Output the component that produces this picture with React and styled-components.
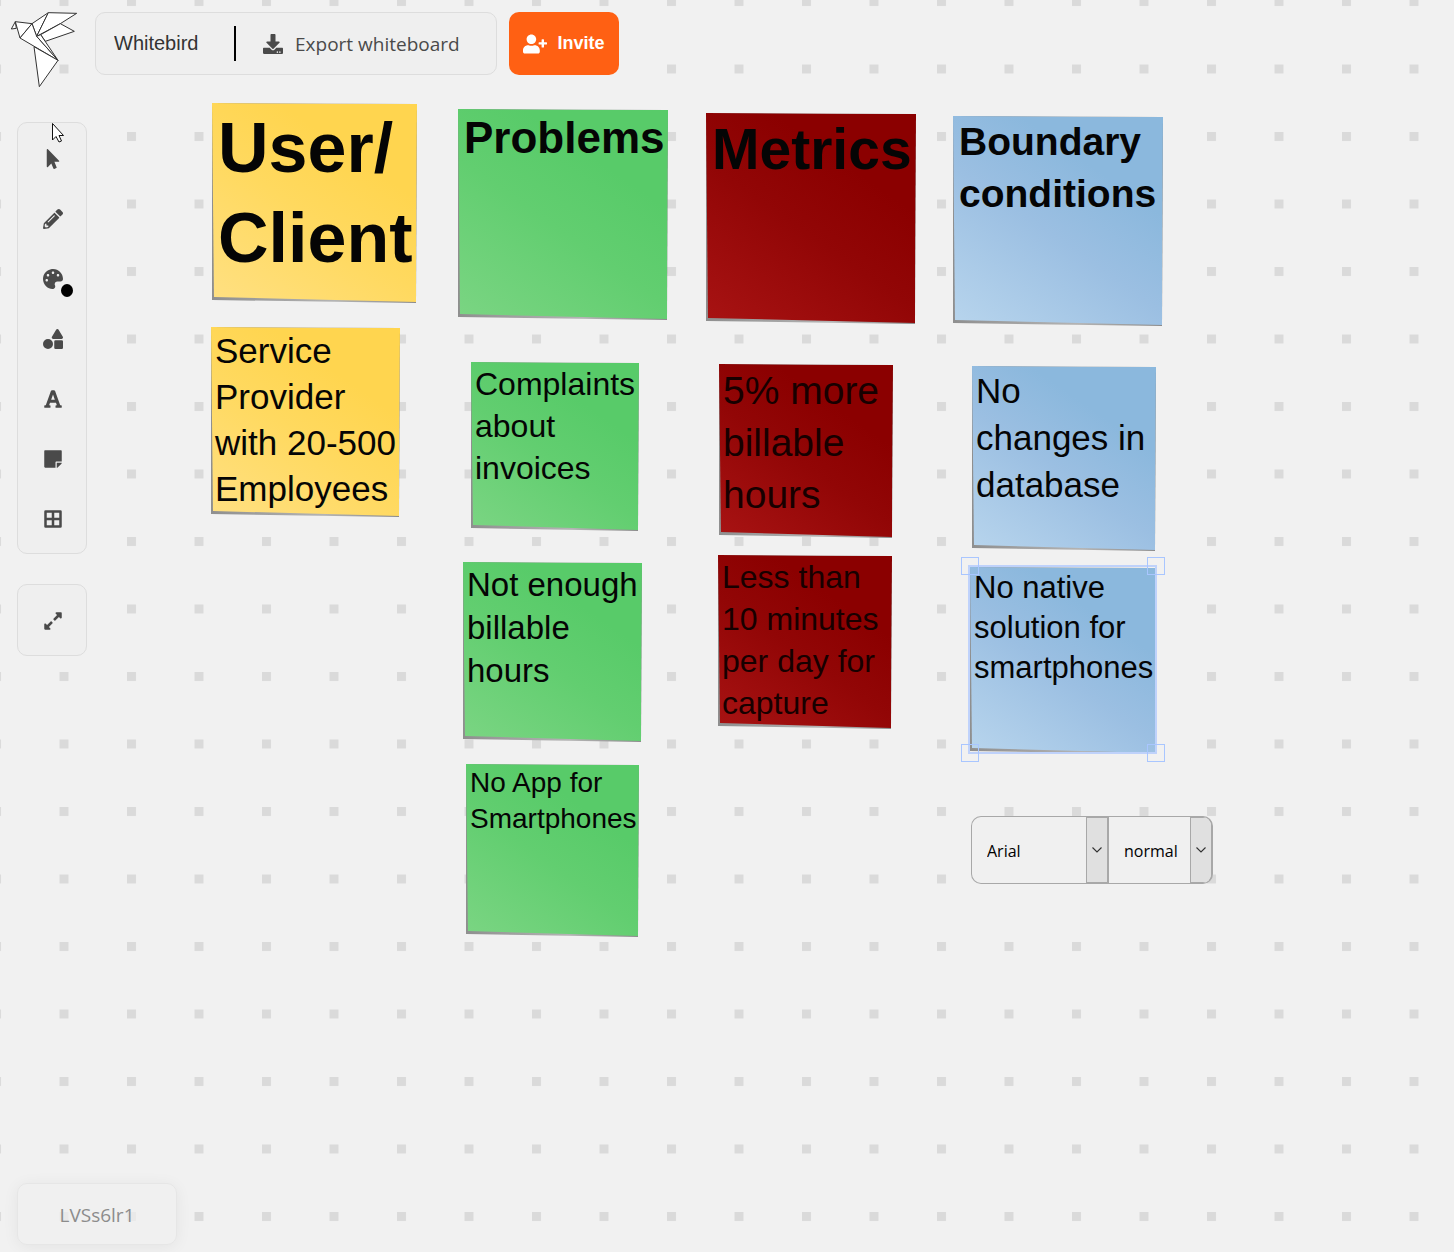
import React from "react";
import styled, { createGlobalStyle, css } from "styled-components";
import {
  FaBorderAll,
  FaDownload,
  FaExpandAlt,
  FaFont,
  FaMousePointer,
  FaPalette,
  FaPencilAlt,
  FaShapes,
  FaStickyNote,
  FaUserPlus,
} from "react-icons/fa";

const sans = `"Liberation Sans", Arial, sans-serif`;
const humanist = `"Open Sans", "Segoe UI", sans-serif`;

const GlobalStyle = createGlobalStyle`
  *, *::before, *::after { box-sizing: border-box; }
  body { margin: 0; background: #f1f1f1; font-family: ${sans}; }
  button, input, select { font: inherit; color: inherit; margin: 0; }
`;

const Board = styled.div`
  position: relative;
  display: flex;
  flex-direction: column;
  justify-content: space-between;
  min-height: 100vh;
  overflow: hidden;
  background: #f1f1f1;
`;

const DotGrid = styled.svg`
  position: absolute;
  inset: 0;
  width: 100%;
  height: 100%;
`;

const Controls = styled.div`
  position: relative;
  z-index: 2;
  display: flex;
  flex-direction: column;
  align-items: flex-start;
`;

const Header = styled.header`
  display: flex;
  align-items: flex-start;
  gap: 12px;
  padding: 12px 12px 0 10px;
`;

const LogoLink = styled.a`
  display: block;
  width: 73px;
  height: 76px;

  svg { display: block; }
`;

const panel = css`
  background: #efefef;
  border: 1px solid #dddddd;
  border-radius: 10px;
`;

const TitleBar = styled.div`
  ${panel}
  display: flex;
  align-items: center;
  width: 402px;
  height: 63px;
  padding: 0 18px;
`;

const TitleInput = styled.input`
  width: 120px;
  height: 34px;
  padding: 0;
  border: 0;
  outline: 0;
  background: transparent;
  color: #333333;
  font-size: 20px;
`;

const Divider = styled.span`
  width: 2px;
  height: 35px;
  background: #000000;
`;

const ExportButton = styled.button`
  display: flex;
  align-items: center;
  gap: 12px;
  padding: 1px 0 0 27px;
  border: 0;
  background: transparent;
  color: #4a4a4a;
  font-family: ${humanist};
  font-size: 19px;
  line-height: 28px;
  white-space: nowrap;
`;

const InviteButton = styled.button`
  display: flex;
  align-items: center;
  justify-content: center;
  gap: 10px;
  width: 110px;
  height: 63px;
  padding: 0;
  border: 0;
  border-radius: 10px;
  background: #ff6013;
  color: #ffffff;
  font-size: 18px;
  font-weight: 700;
`;

const Tools = styled.nav`
  display: flex;
  flex-direction: column;
  gap: 30px;
  margin: 34px 0 0 17px;
`;

const ToolPanel = styled.div`
  ${panel}
  display: flex;
  flex-direction: column;
  width: 70px;
  padding: 6px 0 4px 2px;
`;

const ToolButton = styled.button`
  display: grid;
  place-items: center;
  height: 60px;
  padding: 0;
  border: 0;
  background: transparent;
  color: #4a4a4a;
`;

const IconHolder = styled.span`
  position: relative;
  display: grid;
`;

const ColorDot = styled.span`
  position: absolute;
  left: 18px;
  top: 15px;
  width: 12px;
  height: 13px;
  border-radius: 50%;
  background: #000000;
`;

const Pointer = styled.svg`
  position: absolute;
  z-index: 3;
  left: 51px;
  top: 122px;
`;

const BoardId = styled.footer`
  position: relative;
  z-index: 2;
  align-self: flex-start;
  display: grid;
  place-items: center;
  width: 160px;
  height: 62px;
  margin: 0 0 7px 17px;
  padding-top: 2px;
  border: 1px solid #e6e6e6;
  border-radius: 10px;
  background: rgba(240, 240, 240, 0.7);
  box-shadow: 0 2px 16px rgba(0, 0, 0, 0.06);
  color: #8c8c8c;
  font-family: ${humanist};
  font-size: 19px;
`;

const papers = {
  yellow: ["#ffe082", "#ffd95f", "#ffd54f"],
  green: ["#7bd583", "#62ce70", "#58cb69"],
  red: ["#a81313", "#920606", "#8b0000"],
  blue: ["#b8d5ed", "#9bbfe2", "#8bb8dd"],
};

const NoteShadow = styled.article`
  position: absolute;
  z-index: 1;
  left: ${(p) => p.$x}px;
  top: ${(p) => p.$y}px;
  width: ${(p) => p.$w}px;
  height: ${(p) => p.$h}px;
  background: linear-gradient(90deg, #8f8f8f, #b4b4b4 60%, #8a8a8a);
  clip-path: polygon(0 0, 100% 1px, calc(100% - 1px) 100%, 0 calc(100% - 3px));
`;

const Paper = styled.div`
  height: 100%;
  padding: ${(p) => (p.$bold ? "0 0 0 6px" : "1px 0 0 4px")};
  background: linear-gradient(
    35deg,
    ${(p) => papers[p.$tone][0]},
    ${(p) => papers[p.$tone][1]} 45%,
    ${(p) => papers[p.$tone][2]} 72%
  );
  clip-path: polygon(0 0, 100% 1px, calc(100% - 1px) calc(100% - 1px), 2px calc(100% - 6px));
  color: ${(p) => (p.$tone === "red" && !p.$bold ? "#170000" : "#050505")};
  font-size: ${(p) => p.$size}px;
  font-weight: ${(p) => (p.$bold ? 700 : 400)};
  line-height: ${(p) => p.$line}px;
  white-space: pre;
`;

const Selection = styled.div`
  position: absolute;
  z-index: 2;
  left: 968px;
  top: 565px;
  width: 189px;
  height: 189px;
  border: 2px solid #bfd2fb;
`;

const Handle = styled.span`
  position: absolute;
  width: 18px;
  height: 18px;
  border: 1px solid #a9c6ff;
  ${(p) => (p.$right ? "right: -10px;" : "left: -9px;")}
  ${(p) => (p.$bottom ? "bottom: -10px;" : "top: -10px;")}
`;

const TextMenu = styled.div`
  position: absolute;
  z-index: 2;
  left: 971px;
  top: 816px;
  display: flex;
  height: 68px;
  border: 1px solid #a8a8a8;
  border-right-width: 2px;
  border-radius: 10px;
  background: #f0f0f0;
  overflow: hidden;
`;

const SelectBox = styled.label`
  display: grid;
  grid-template-columns: 1fr 21px;
  width: ${(p) => p.$width}px;

  & + & { border-left: 2px solid #a8a8a8; }
`;

const Select = styled.select`
  grid-area: 1 / 1 / 2 / 3;
  width: 100%;
  padding: 1px 0 0 15px;
  border: 0;
  outline: 0;
  appearance: none;
  background: transparent;
  color: #000000;
  font-family: ${humanist};
  font-size: 16px;
`;

const SelectArrow = styled.span`
  grid-area: 1 / 2 / 2 / 3;
  display: grid;
  place-items: center;
  border: 1px solid #a8a8a8;
  border-right-width: 0;
  background: #e0e0e0;
  pointer-events: none;
`;

const notes = [
  { tone: "yellow", x: 212, y: 103, w: 205, h: 200, size: 70, line: 90, bold: true, text: "User/\nClient" },
  { tone: "green", x: 458, y: 109, w: 210, h: 211, size: 44, line: 57, bold: true, text: "Problems" },
  { tone: "red", x: 706, y: 113, w: 210, h: 211, size: 57, line: 72, bold: true, text: "Metrics" },
  { tone: "blue", x: 953, y: 116, w: 210, h: 210, size: 39, line: 52, bold: true, text: "Boundary\nconditions" },
  { tone: "yellow", x: 211, y: 327, w: 189, h: 190, size: 35, line: 46, text: "Service\nProvider\nwith 20-500\nEmployees" },
  { tone: "green", x: 471, y: 362, w: 168, h: 169, size: 32, line: 42, text: "Complaints\nabout\ninvoices" },
  { tone: "red", x: 719, y: 364, w: 174, h: 174, size: 39, line: 52, text: "5% more\nbillable\nhours" },
  { tone: "blue", x: 972, y: 366, w: 184, h: 185, size: 35, line: 47, text: "No\nchanges in\ndatabase" },
  { tone: "green", x: 463, y: 562, w: 179, h: 180, size: 33, line: 43, text: "Not enough\nbillable\nhours" },
  { tone: "red", x: 718, y: 555, w: 174, h: 174, size: 32, line: 42, text: "Less than\n10 minutes\nper day for\ncapture" },
  { tone: "blue", x: 970, y: 567, w: 186, h: 187, size: 31, line: 40, text: "No native\nsolution for\nsmartphones" },
  { tone: "green", x: 466, y: 764, w: 173, h: 173, size: 28, line: 36, text: "No App for\nSmartphones" },
];

const tools = [
  { label: "Select", Icon: FaMousePointer },
  { label: "Draw", Icon: FaPencilAlt },
  { label: "Color", Icon: FaPalette, color: true },
  { label: "Shapes", Icon: FaShapes },
  { label: "Text", Icon: FaFont },
  { label: "Sticky note", Icon: FaStickyNote },
  { label: "Grid", Icon: FaBorderAll },
];

function Note({ x, y, w, h, tone, size, line, bold, text }) {
  return (
    <NoteShadow $x={x} $y={y} $w={w} $h={h}>
      <Paper $tone={tone} $size={size} $line={line} $bold={bold}>{text}</Paper>
    </NoteShadow>
  );
}

function Dropdown({ label, width, options }) {
  return (
    <SelectBox $width={width}>
      <Select aria-label={label}>
        {options.map((o) => <option key={o}>{o}</option>)}
      </Select>
      <SelectArrow>
        <svg width="10" height="6" viewBox="0 0 10 6" fill="none" stroke="#333" strokeWidth="1.1">
          <path d="M.5.5 5 5 9.5.5" />
        </svg>
      </SelectArrow>
    </SelectBox>
  );
}

function Bird() {
  return (
    <svg width="73" height="76" viewBox="30 36 219 228" fill="#fff" stroke="#333" strokeWidth="3" strokeLinejoin="round">
      <path d="M46 65 34 87 49 85Z" />
      <path d="M46 65 96 71 60 114Z" />
      <path d="M96 71 145 38 110 109Z" />
      <path d="M145 38 230 40 181 71 110 109Z" />
      <path d="M181 71 223 94 136 124 122 104Z" />
      <path d="M96 71 60 114 174 181 110 109Z" />
      <path d="M110 109 122 104 174 181Z" />
      <path d="M102 140 118 260 174 181Z" />
    </svg>
  );
}

export default function App() {
  return (
    <Board>
      <GlobalStyle />
      <DotGrid aria-hidden="true">
        <defs>
          <pattern id="dots" x="59.5" y="-3" width="67.5" height="67.5" patternUnits="userSpaceOnUse">
            <rect width="9" height="9" fill="#dadada" />
          </pattern>
        </defs>
        <rect width="100%" height="100%" fill="url(#dots)" />
      </DotGrid>

      <Controls>
        <Header>
          <LogoLink href="#" aria-label="Whitebird"><Bird /></LogoLink>
          <TitleBar>
            <TitleInput aria-label="Whiteboard name" defaultValue="Whitebird" />
            <Divider />
            <ExportButton type="button"><FaDownload size={20} />Export whiteboard</ExportButton>
          </TitleBar>
          <InviteButton type="button"><FaUserPlus size={24} />Invite</InviteButton>
        </Header>
        <Tools aria-label="Tools">
          <ToolPanel>
            {tools.map(({ label, Icon, color }) => (
              <ToolButton key={label} type="button" aria-label={label}>
                <IconHolder>
                  <Icon size={20} />
                  {color && <ColorDot />}
                </IconHolder>
              </ToolButton>
            ))}
          </ToolPanel>
          <ToolPanel>
            <ToolButton type="button" aria-label="Expand"><FaExpandAlt size={20} /></ToolButton>
          </ToolPanel>
        </Tools>
      </Controls>

      {notes.map((n) => <Note key={n.text} {...n} />)}

      <Selection>
        <Handle />
        <Handle $right />
        <Handle $bottom />
        <Handle $right $bottom />
      </Selection>

      <TextMenu>
        <Dropdown label="Font family" width={135} options={["Arial", "Georgia"]} />
        <Dropdown label="Font weight" width={104} options={["normal", "bold"]} />
      </TextMenu>

      <Pointer width="13" height="21" viewBox="0 0 13 21" fill="#fff" stroke="#111" strokeWidth="1">
        <path d="M1.500 1.500V18L5 14.500 8 20 10.500 19 8 13.500H12.500Z" />
      </Pointer>

      <BoardId>LVSs6lr1</BoardId>
    </Board>
  );
}
